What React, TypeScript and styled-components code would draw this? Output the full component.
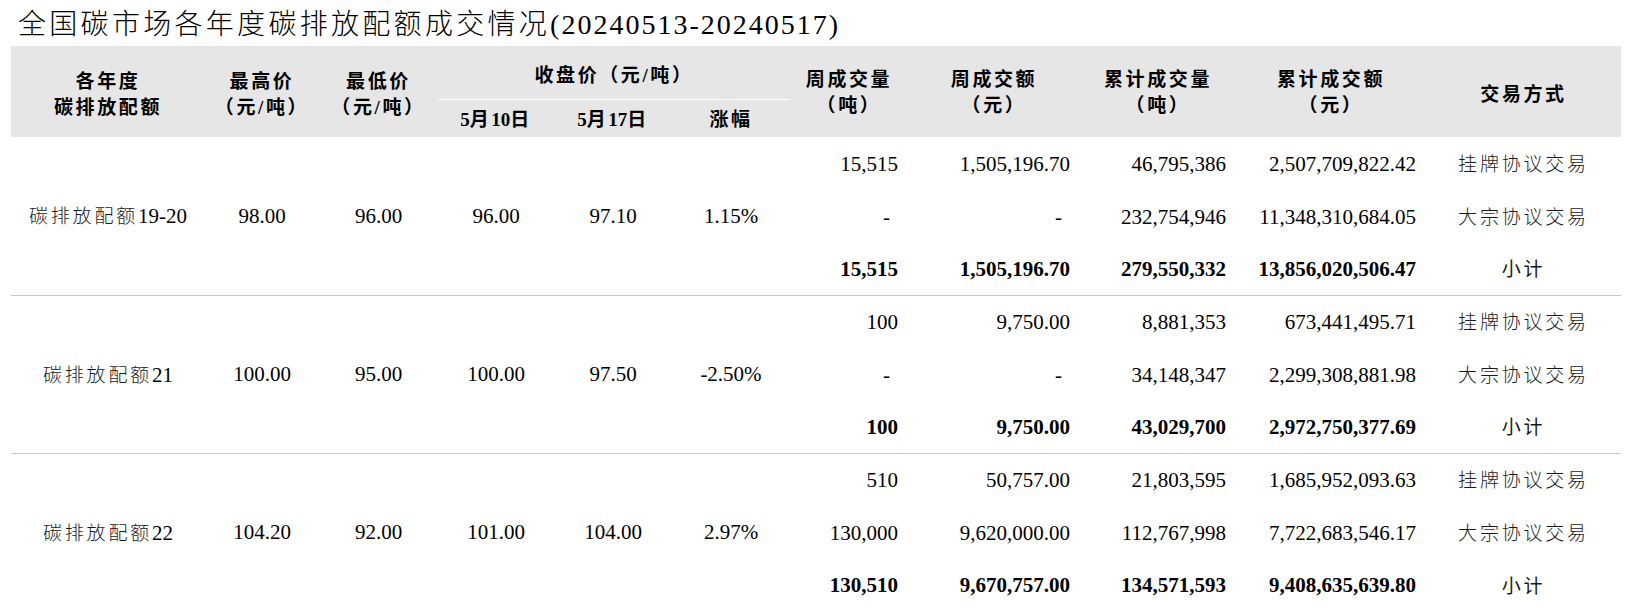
import React from "react";
import styled, { createGlobalStyle } from "styled-components";

const GlobalStyle = createGlobalStyle`
  html, body { margin: 0; padding: 0; background: #ffffff; }
  body { font-family: "Liberation Serif", "Noto Sans CJK SC", serif; color: #000; }
`;

const Page = styled.div`
  padding: 0 8px 0 11px;
  width: 1610px;
`;

const Title = styled.div`
  box-sizing: border-box;
  height: 46px;
  padding: 4px 0 0 7px;
  line-height: 42px;
  font-size: 28px;
  font-weight: 400;
  letter-spacing: 2px;
  white-space: nowrap;
  color: #000;
`;

const TitleCjk = styled.span`
  letter-spacing: 3.3px;
  font-weight: 300;
`;

const Table = styled.table`
  border-collapse: collapse;
  table-layout: fixed;
  width: 1610px;
`;

const HeadRow = styled.tr<{ $h: number }>`
  height: ${(p) => p.$h}px;
`;

const Th = styled.th<{ $group?: boolean; $pt?: number }>`
  background: #e6e6e6;
  font-size: 19px;
  font-weight: 700;
  letter-spacing: 2.6px;
  line-height: 26px;
  text-align: center;
  vertical-align: middle;
  padding: ${(p) => p.$pt ?? 5}px 0 0 0;
  white-space: nowrap;
  border-bottom: ${(p) => (p.$group ? "1px solid #ffffff" : "none")};
`;

const Digits = styled.span`
  letter-spacing: 0;
`;

const BodyRow = styled.tr<{ $sep?: boolean; $h: number }>`
  height: ${(p) => p.$h}px;
  & > td {
    border-top: ${(p) => (p.$sep ? "1px solid #c8c8c8" : "none")};
  }
`;

const Td = styled.td<{ $align?: "left" | "right" | "center"; $bold?: boolean }>`
  font-size: 21px;
  font-weight: ${(p) => (p.$bold ? 700 : 400)};
  text-align: ${(p) => p.$align ?? "center"};
  padding: 0 ${(p) => (p.$align === "right" ? "10px" : "0")} 0 0;
  vertical-align: middle;
  white-space: nowrap;
  line-height: 24px;
`;

const Cjk = styled.span<{ $strong?: boolean }>`
  font-family: "Noto Sans CJK SC", sans-serif;
  font-size: 19px;
  font-weight: ${(p) => (p.$strong ? 400 : 300)};
  letter-spacing: 2.8px;
  color: #1a1a1a;
`;

const Dash = styled.span`
  margin-right: 8px;
`;

const cols = [194, 114, 119, 116, 118, 118, 118, 172, 156, 190, 195];

type Sub = { vol: string; amt: string; cumVol: string; cumAmt: string; mode: string };
type Group = {
  name: string;
  year: string;
  high: string;
  low: string;
  c1: string;
  c2: string;
  chg: string;
  rows: Sub[];
};

const groups: Group[] = [
  {
    name: "碳排放配额",
    year: "19-20",
    high: "98.00",
    low: "96.00",
    c1: "96.00",
    c2: "97.10",
    chg: "1.15%",
    rows: [
      { vol: "15,515", amt: "1,505,196.70", cumVol: "46,795,386", cumAmt: "2,507,709,822.42", mode: "挂牌协议交易" },
      { vol: "-", amt: "-", cumVol: "232,754,946", cumAmt: "11,348,310,684.05", mode: "大宗协议交易" },
      { vol: "15,515", amt: "1,505,196.70", cumVol: "279,550,332", cumAmt: "13,856,020,506.47", mode: "小计" },
    ],
  },
  {
    name: "碳排放配额",
    year: "21",
    high: "100.00",
    low: "95.00",
    c1: "100.00",
    c2: "97.50",
    chg: "-2.50%",
    rows: [
      { vol: "100", amt: "9,750.00", cumVol: "8,881,353", cumAmt: "673,441,495.71", mode: "挂牌协议交易" },
      { vol: "-", amt: "-", cumVol: "34,148,347", cumAmt: "2,299,308,881.98", mode: "大宗协议交易" },
      { vol: "100", amt: "9,750.00", cumVol: "43,029,700", cumAmt: "2,972,750,377.69", mode: "小计" },
    ],
  },
  {
    name: "碳排放配额",
    year: "22",
    high: "104.20",
    low: "92.00",
    c1: "101.00",
    c2: "104.00",
    chg: "2.97%",
    rows: [
      { vol: "510", amt: "50,757.00", cumVol: "21,803,595", cumAmt: "1,685,952,093.63", mode: "挂牌协议交易" },
      { vol: "130,000", amt: "9,620,000.00", cumVol: "112,767,998", cumAmt: "7,722,683,546.17", mode: "大宗协议交易" },
      { vol: "130,510", amt: "9,670,757.00", cumVol: "134,571,593", cumAmt: "9,408,635,639.80", mode: "小计" },
    ],
  },
];

const Num: React.FC<{ v: string }> = ({ v }) => (v === "-" ? <Dash>-</Dash> : <>{v}</>);

const heights = [53, 53, 52];

export default function App() {
  return (
    <>
      <GlobalStyle />
      <Page>
        <Title>
          <TitleCjk>全国碳市场各年度碳排放配额成交情况</TitleCjk>(20240513-20240517)
        </Title>
        <Table>
          <colgroup>
            {cols.map((w, i) => (
              <col key={i} style={{ width: w }} />
            ))}
          </colgroup>
          <thead>
            <HeadRow $h={53}>
              <Th rowSpan={2} $pt={7}>
                各年度
                <br />
                碳排放配额
              </Th>
              <Th rowSpan={2} $pt={7}>
                最高价
                <br />
                （元/吨）
              </Th>
              <Th rowSpan={2} $pt={7}>
                最低价
                <br />
                （元/吨）
              </Th>
              <Th colSpan={3} $group $pt={7}>
                收盘价（元/吨）
              </Th>
              <Th rowSpan={2} $pt={3}>
                周成交量
                <br />
                （吨）
              </Th>
              <Th rowSpan={2} $pt={3}>
                周成交额
                <br />
                （元）
              </Th>
              <Th rowSpan={2} $pt={3}>
                累计成交量
                <br />
                （吨）
              </Th>
              <Th rowSpan={2} $pt={3}>
                累计成交额
                <br />
                （元）
              </Th>
              <Th rowSpan={2} $pt={7}>
                交易方式
              </Th>
            </HeadRow>
            <HeadRow $h={38}>
              <Th $pt={4}>
                <Digits>5</Digits>月<Digits>10</Digits>日
              </Th>
              <Th $pt={4}>
                <Digits>5</Digits>月<Digits>17</Digits>日
              </Th>
              <Th $pt={4}>涨幅</Th>
            </HeadRow>
          </thead>
          <tbody>
            {groups.map((g, gi) =>
              g.rows.map((r, ri) => {
                const total = ri === 2;
                return (
                  <BodyRow key={`${gi}-${ri}`} $sep={gi > 0 && ri === 0} $h={heights[ri]}>
                    {ri === 0 && (
                      <>
                        <Td rowSpan={3}>
                          <Cjk>{g.name}</Cjk>
                          {g.year}
                        </Td>
                        <Td rowSpan={3}>{g.high}</Td>
                        <Td rowSpan={3}>{g.low}</Td>
                        <Td rowSpan={3}>{g.c1}</Td>
                        <Td rowSpan={3}>{g.c2}</Td>
                        <Td rowSpan={3}>{g.chg}</Td>
                      </>
                    )}
                    <Td $align="right" $bold={total}>
                      <Num v={r.vol} />
                    </Td>
                    <Td $align="right" $bold={total}>
                      <Num v={r.amt} />
                    </Td>
                    <Td $align="right" $bold={total}>
                      {r.cumVol}
                    </Td>
                    <Td $align="right" $bold={total}>
                      {r.cumAmt}
                    </Td>
                    <Td>
                      <Cjk $strong={total}>{r.mode}</Cjk>
                    </Td>
                  </BodyRow>
                );
              })
            )}
          </tbody>
        </Table>
      </Page>
    </>
  );
}
